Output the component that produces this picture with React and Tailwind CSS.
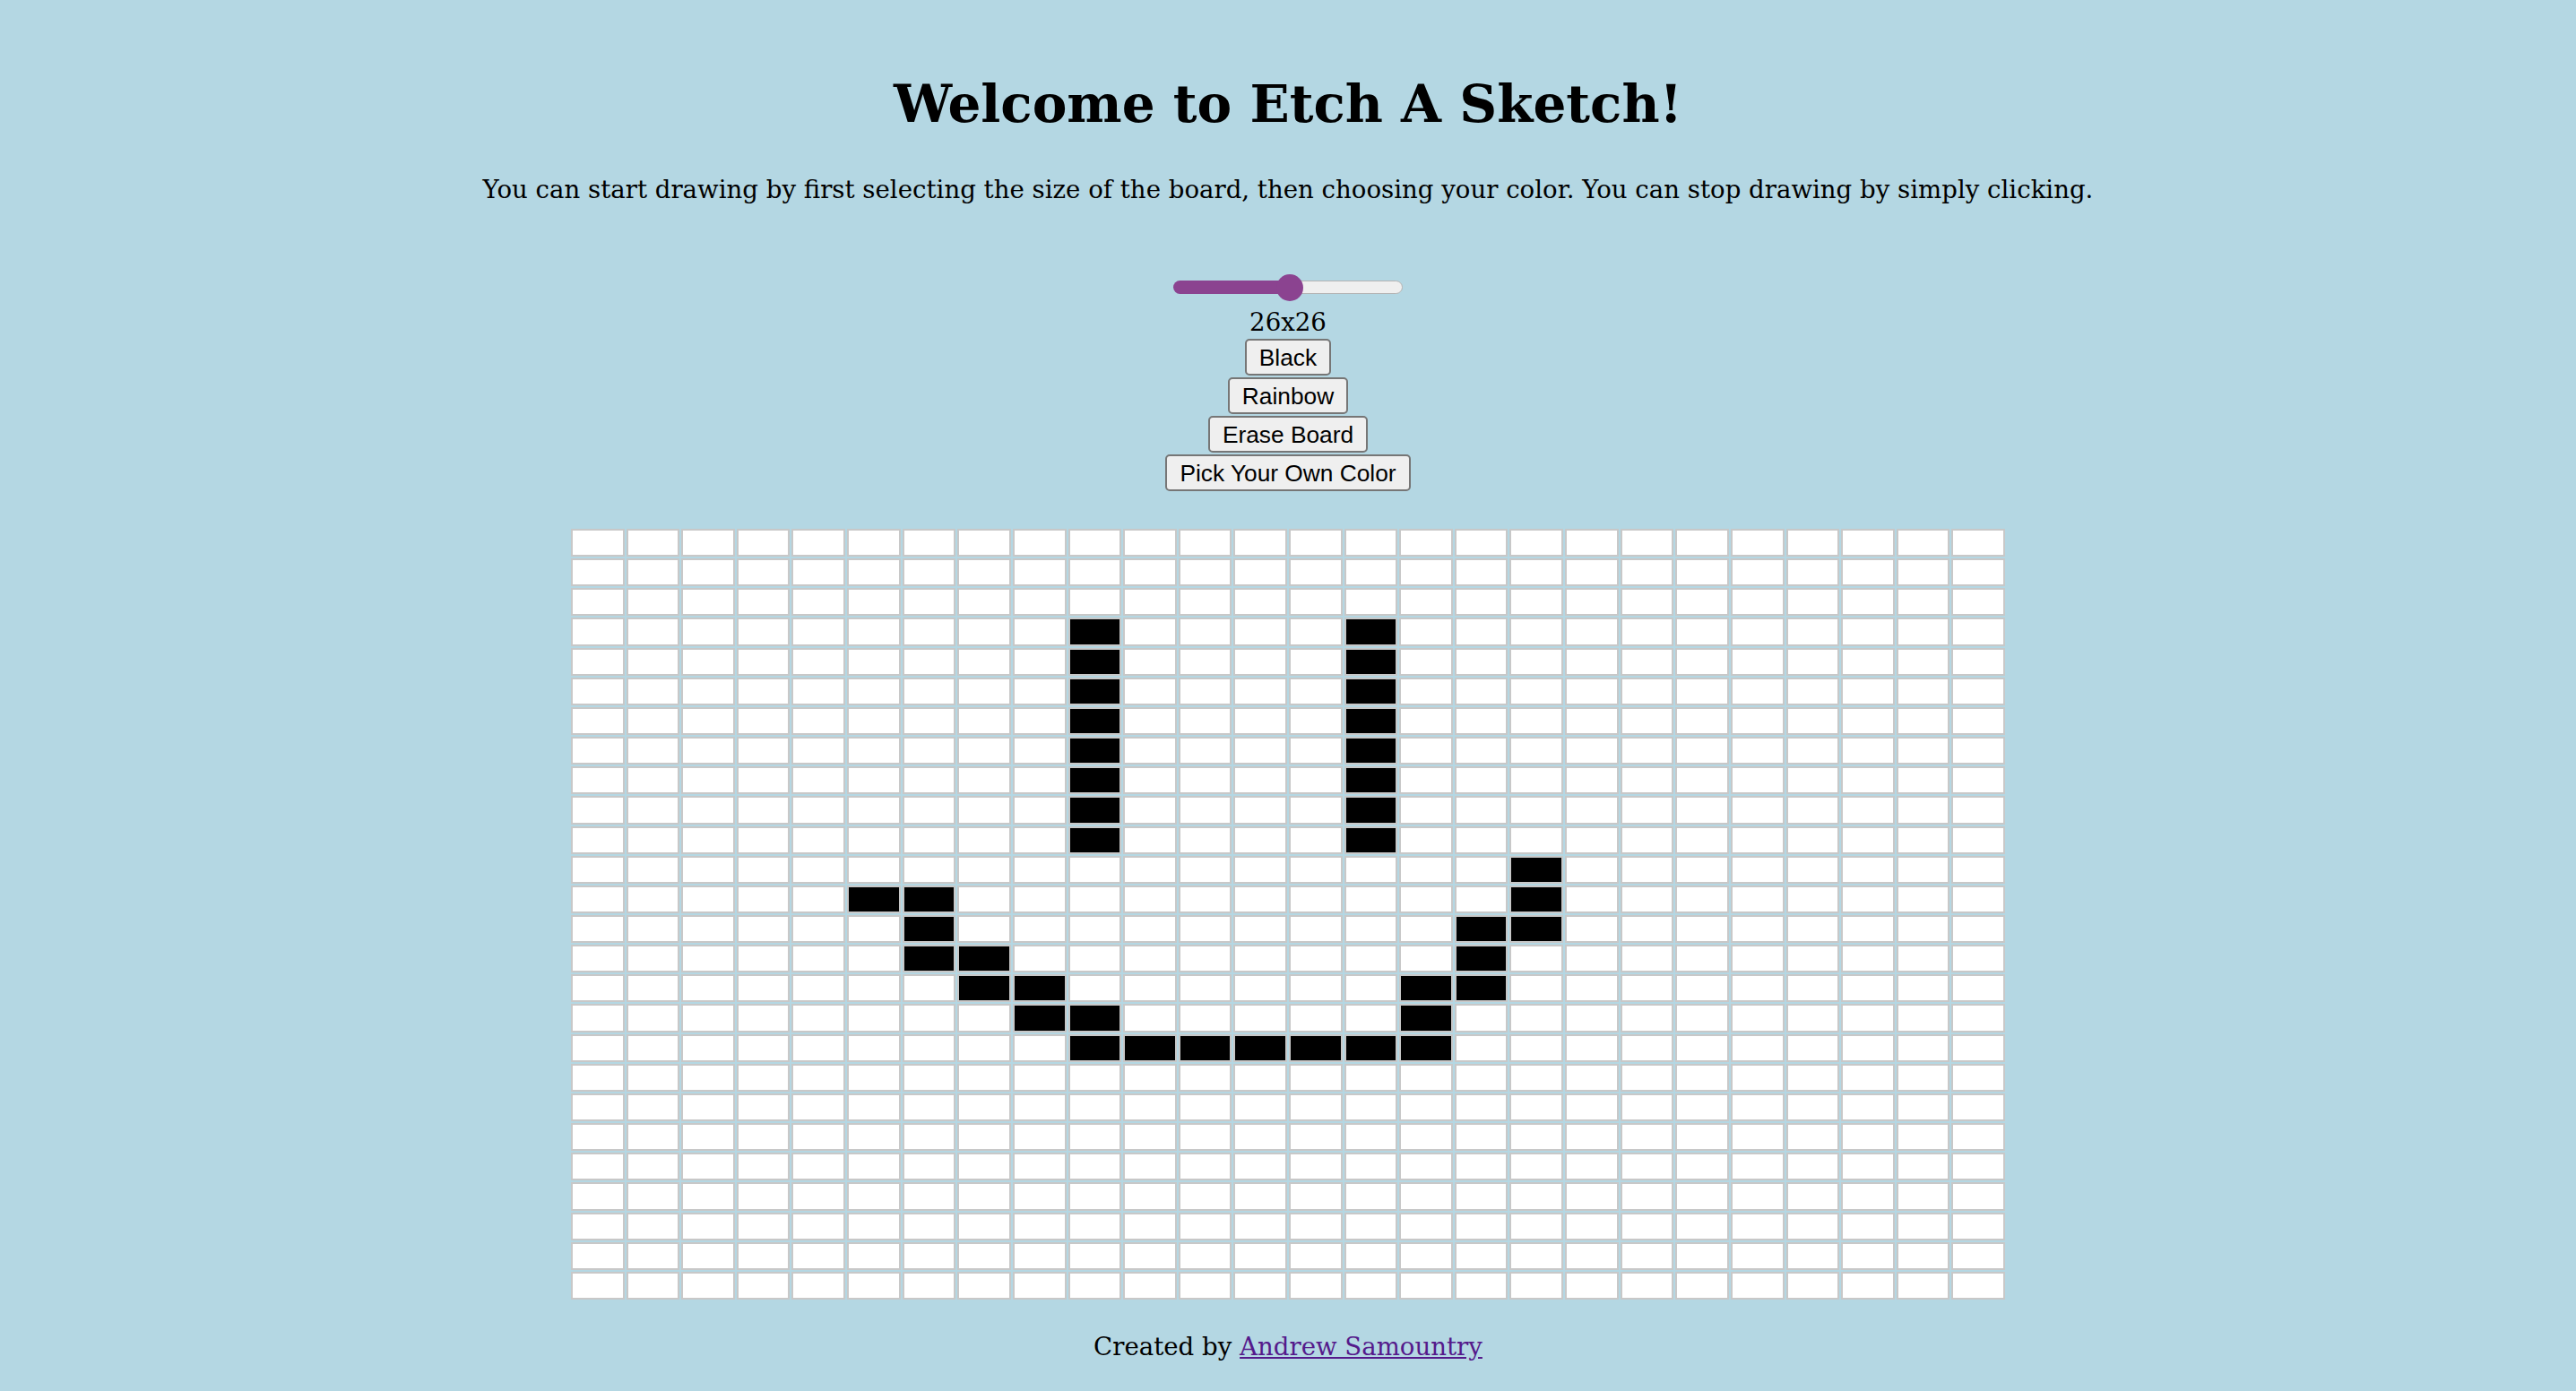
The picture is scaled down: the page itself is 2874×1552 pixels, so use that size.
import { useMemo } from "react";

// board is 26x26, black cells drawn as a smiley
const SIZE = 26;
const BLACK = [
  [3, 9], [4, 9], [5, 9], [6, 9], [7, 9], [8, 9], [9, 9], [10, 9],
  [3, 14], [4, 14], [5, 14], [6, 14], [7, 14], [8, 14], [9, 14], [10, 14],
  [11, 17],
  [12, 5], [12, 6], [12, 17],
  [13, 6], [13, 16], [13, 17],
  [14, 6], [14, 7], [14, 16],
  [15, 7], [15, 8], [15, 15], [15, 16],
  [16, 8], [16, 9], [16, 15],
  [17, 9], [17, 10], [17, 11], [17, 12], [17, 13], [17, 14], [17, 15],
];

function Slider() {
  return (
    <div className="relative mt-[80px] h-[30px] w-[256px]">
      <div className="absolute left-0 right-0 top-[7px] flex h-[15px]">
        <div className="h-full w-[130px] rounded-l-full bg-[#8b4390]" />
        <div className="h-full flex-1 rounded-r-full border border-[#b3b3b3] bg-[#efefef]" />
      </div>
      <div className="absolute left-[115px] top-0 h-[30px] w-[30px] rounded-full bg-[#8b4390]" />
    </div>
  );
}

function Btn({ children }) {
  return (
    <button className="flex h-[41px] items-center rounded-[5px] border-2 border-[#767676] bg-[#efefef] px-[14px] font-['Liberation_Sans',Arial,sans-serif] text-[26.3px] leading-[30px] text-black">
      {children}
    </button>
  );
}

function Board() {
  const filled = useMemo(() => new Set(BLACK.map(([r, c]) => r * SIZE + c)), []);
  const cells = [];
  for (let i = 0; i < SIZE * SIZE; i++) {
    cells.push(
      <div
        key={i}
        className={
          "border-2 border-[#c8c8c8] " + (filled.has(i) ? "bg-black" : "bg-white")
        }
      />
    );
  }
  return (
    <div className="mt-[42px] grid h-[860px] w-[1600px] grid-cols-[repeat(26,minmax(0,1fr))] grid-rows-[repeat(26,minmax(0,1fr))] gap-[2px]">
      {cells}
    </div>
  );
}

export default function App() {
  return (
    <div className="flex min-h-screen flex-col items-center bg-[#b4d7e3] font-['DejaVu_Serif',Georgia,serif] text-black">
      <h1 className="mt-[86px] text-[58px] font-bold leading-[60px]">Welcome to Etch A Sketch!</h1>
      <p className="mt-[52px] text-[27.6px] leading-[28px]">
        You can start drawing by first selecting the size of the board, then choosing your color. You can stop drawing by simply clicking.
      </p>
      <Slider />
      <div className="mt-[10px] text-[27.6px] leading-[28px]">26x26</div>
      <div className="mt-[4px] flex flex-col items-center gap-[2px]">
        <Btn>Black</Btn>
        <Btn>Rainbow</Btn>
        <Btn>Erase Board</Btn>
        <Btn>Pick Your Own Color</Btn>
      </div>
      <Board />
      <div className="mt-[39px] text-[27.6px] leading-[28px]">
        Created by{" "}
        <a href="#" className="text-[#551a8b] underline">
          Andrew Samountry
        </a>
      </div>
    </div>
  );
}
